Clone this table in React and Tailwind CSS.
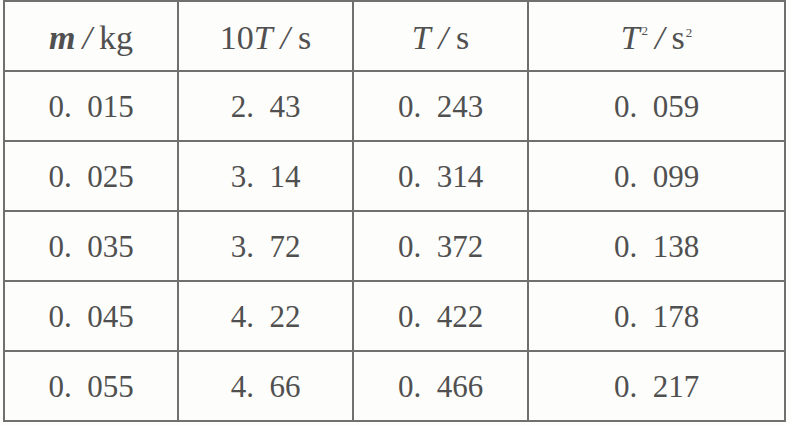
const rows = [
  ['0.\u2002015', '2.\u200243', '0.\u2002243', '0.\u2002059'],
  ['0.\u2002025', '3.\u200214', '0.\u2002314', '0.\u2002099'],
  ['0.\u2002035', '3.\u200272', '0.\u2002372', '0.\u2002138'],
  ['0.\u2002045', '4.\u200222', '0.\u2002422', '0.\u2002178'],
  ['0.\u2002055', '4.\u200266', '0.\u2002466', '0.\u2002217'],
];

export default function App() {
  return (
    <div className="h-[425px] w-[791px] bg-[#fdfdfb] pl-[3px] pt-0 font-['Liberation_Serif',serif] text-[31px] text-[#505050]">
      <table className="table-fixed border-collapse">
        <colgroup>
          <col className="w-[174px]" />
          <col className="w-[175px]" />
          <col className="w-[175px]" />
          <col className="w-[257px]" />
        </colgroup>
        <thead>
          <tr className="h-[70px] text-[34px]">
            <th className="border-2 border-[#707070] pt-[2px] text-center font-normal">
              <span className="font-bold italic">m</span>
              <span className="mx-[7px] italic">/</span>
              <span>kg</span>
            </th>
            <th className="border-2 border-[#707070] pt-[2px] text-center font-normal">
              10<span className="italic">T</span>
              <span className="mx-[8px] italic">/</span>s
            </th>
            <th className="border-2 border-[#707070] pt-[2px] text-center font-normal">
              <span className="italic">T</span>
              <span className="mx-[8px] italic">/</span>s
            </th>
            <th className="border-2 border-[#707070] pt-[2px] text-center font-normal">
              <span className="italic">T</span>
              <span className="relative -top-[14px] ml-[2px] align-baseline text-[13px]">2</span>
              <span className="mx-[7px] italic">/</span>s
              <span className="relative -top-[12px] ml-[1px] align-baseline text-[13px]">2</span>
            </th>
          </tr>
        </thead>
        <tbody>
          {rows.map((r) => (
            <tr key={r[0]} className="h-[70px]">
              {r.map((c, i) => (
                <td key={i} className="border-2 border-[#707070] pt-[3px] text-center">
                  {c}
                </td>
              ))}
            </tr>
          ))}
        </tbody>
      </table>
    </div>
  );
}
